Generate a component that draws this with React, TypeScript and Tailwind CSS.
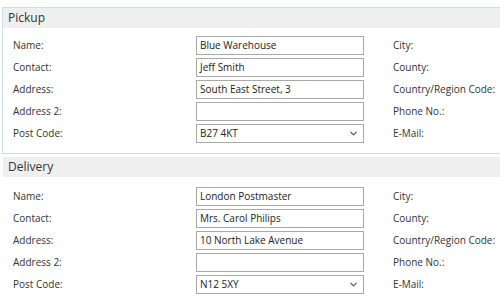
import { ChevronDown } from "lucide-react";

type Field = { label: string; value: string; select?: boolean };

const rightLabels = ["City:", "County:", "Country/Region Code:", "Phone No.:", "E-Mail:"];

const pickup: Field[] = [
  { label: "Name:", value: "Blue Warehouse" },
  { label: "Contact:", value: "Jeff Smith" },
  { label: "Address:", value: "South East Street, 3" },
  { label: "Address 2:", value: "" },
  { label: "Post Code:", value: "B27 4KT", select: true },
];

const delivery: Field[] = [
  { label: "Name:", value: "London Postmaster" },
  { label: "Contact:", value: "Mrs. Carol Philips" },
  { label: "Address:", value: "10 North Lake Avenue" },
  { label: "Address 2:", value: "" },
  { label: "Post Code:", value: "N12 5XY", select: true },
];

function Section({ title, fields, focused }: { title: string; fields: Field[]; focused?: boolean }) {
  return (
    <div className={focused ? "border border-[#cfdcec]" : "border border-transparent"}>
      <div className="h-[20px] bg-[#efefef] px-[5px] text-[12px] leading-[20px] text-[#333]">{title}</div>
      <div className={focused ? "flex flex-col gap-[3px] pl-[10px] pt-[8px] pb-[10px]" : "flex flex-col gap-[3px] pl-[10px] pt-[10px] pb-[8px]"}>
        {fields.map((f, i) => (
          <div key={f.label} className="flex h-[19px] items-center text-[10px] text-[#333]">
            <div className="w-[183px] shrink-0">{f.label}</div>
            <div className="flex h-[19px] w-[168px] shrink-0 items-center justify-between border border-[#a9a9a9] bg-white pl-[3px] pr-[4px] text-[#222]">
              <span>{f.value}</span>
              {f.select && <ChevronDown size={11} strokeWidth={2.5} className="text-[#555]" />}
            </div>
            <div className="ml-[29px] whitespace-nowrap">{rightLabels[i]}</div>
          </div>
        ))}
      </div>
    </div>
  );
}

export default function App() {
  return (
    <div
      className="relative h-[304px] w-[500px] overflow-hidden bg-white"
      style={{ fontFamily: '"Open Sans", "Noto Sans", sans-serif' }}
    >
      <div className="ml-[2px] mt-[7px] w-[520px]">
        <Section title="Pickup" fields={pickup} focused />
        <div className="mt-[2px]">
          <Section title="Delivery" fields={delivery} />
        </div>
      </div>
    </div>
  );
}
